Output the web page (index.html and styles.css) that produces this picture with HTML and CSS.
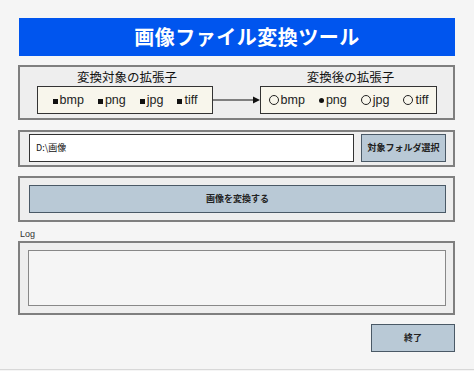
FILE: index.html
```html
<!DOCTYPE html>
<html lang="ja">
<head>
<meta charset="utf-8">
<title>画像ファイル変換ツール</title>
<link rel="stylesheet" href="styles.css">
</head>
<body>
<div class="app">
  <h1 class="title">画像ファイル変換ツール</h1>

  <section class="panel ext-panel">
    <div class="ext-label">変換対象の拡張子</div>
    <div></div>
    <div class="ext-label">変換後の拡張子</div>
    <div class="ext-box">
      <span class="opt"><i class="sq"></i>bmp</span>
      <span class="opt"><i class="sq"></i>png</span>
      <span class="opt"><i class="sq"></i>jpg</span>
      <span class="opt"><i class="sq"></i>tiff</span>
    </div>
    <div class="arrow">
      <svg width="47" height="10" viewBox="0 0 47 10"><line x1="0" y1="5" x2="41" y2="5" stroke="#111" stroke-width="1"/><polygon points="40,1.5 47,5 40,8.5" fill="#111"/></svg>
    </div>
    <div class="ext-box">
      <span class="opt"><i class="ring"></i>bmp</span>
      <span class="opt"><i class="dot"></i>png</span>
      <span class="opt"><i class="ring"></i>jpg</span>
      <span class="opt"><i class="ring"></i>tiff</span>
    </div>
  </section>

  <section class="panel folder-panel">
    <div class="path-input">D:\画像</div>
    <div class="btn folder-btn">対象フォルダ選択</div>
  </section>

  <section class="panel convert-panel">
    <div class="btn convert-btn">画像を変換する</div>
  </section>

  <div class="log-label">Log</div>
  <section class="panel log-panel">
    <div class="log-box"></div>
  </section>

  <div class="footer">
    <div class="btn end-btn">終了</div>
  </div>
</div>
</body>
</html>
```

FILE: styles.css
```css
html, body {
  margin: 0;
  padding: 0;
  background: #f5f5f5;
}
body {
  width: 474px;
  height: 371px;
  overflow: hidden;
  font-family: "Liberation Sans", "Noto Sans CJK JP", sans-serif;
  color: #111;
}
.app {
  padding: 18px 19px 0 18px;
  height: 351px;
  border-bottom: 1px solid #d8d8d8;
}
.title {
  margin: 0 0 9px 1px;
  height: 38px;
  background: #0055ee;
  color: #fff;
  font-family: "Noto Sans CJK JP", sans-serif;
  font-weight: 700;
  font-size: 20px;
  line-height: 38px;
  text-align: center;
  padding-left: 20px;
  letter-spacing: 0.5px;
}
.panel {
  border: 2px solid #7f7f7f;
  background: #eeeeee;
  box-sizing: border-box;
}
.ext-panel {
  height: 55px;
  margin-bottom: 10px;
  display: grid;
  grid-template-columns: 176px 47px 177px;
  grid-template-rows: 16px 28px;
  padding: 3px 16px 0 17px;
}
.ext-label {
  font-family: "Noto Sans CJK JP", sans-serif;
  font-size: 12.5px;
  line-height: 14px;
  text-align: center;
  font-weight: 400;
  padding-left: 4px;
}
.ext-box {
  border: 1px solid #333;
  background: #f8f6ec;
  box-sizing: border-box;
  display: flex;
  align-items: center;
  justify-content: center;
  gap: 14px;
  font-size: 12.5px;
  color: #222;
}
.opt {
  display: inline-flex;
  align-items: center;
}
.sq {
  display: inline-block;
  width: 5px;
  height: 5px;
  background: #111;
  margin-right: 2px;
  margin-top: 2px;
}
.ring {
  display: inline-block;
  width: 8px;
  height: 8px;
  border: 1px solid #222;
  border-radius: 50%;
  margin-right: 2px;
}
.dot {
  display: inline-block;
  width: 5px;
  height: 5px;
  background: #111;
  border-radius: 50%;
  margin-right: 2px;
}
.arrow {
  display: flex;
  align-items: center;
}
.arrow svg { display: block; }

.folder-panel {
  height: 37px;
  margin-bottom: 9px;
  display: flex;
  gap: 7px;
  padding: 2px 7px 3px 9px;
}
.path-input {
  flex: 1;
  background: #fff;
  border: 1px solid #333;
  box-sizing: border-box;
  font-family: "Noto Sans CJK JP", sans-serif;
  font-size: 9px;
  line-height: 26px;
  padding-left: 6px;
}
.btn {
  background: #b9c9d6;
  border: 1px solid #4a5966;
  box-sizing: border-box;
  font-family: "Noto Sans CJK JP", sans-serif;
  font-size: 9px;
  font-weight: 700;
  color: #222;
  text-align: center;
  height: 28px;
  line-height: 26px;
}
.folder-btn {
  width: 85px;
}
.convert-panel {
  height: 46px;
  padding: 7px 7px 7px 9px;
}
.convert-btn {
  width: 100%;
}
.log-label {
  font-size: 9px;
  color: #333;
  margin: 7px 0 0 2px;
  height: 12px;
  line-height: 10px;
}
.log-panel {
  height: 74px;
  padding: 7px 7px 7px 8px;
}
.log-box {
  height: 56px;
  border: 1px solid #888;
  background: #f5f5f5;
  box-sizing: border-box;
}
.footer {
  display: flex;
  justify-content: flex-end;
  margin-top: 9px;
}
.end-btn {
  width: 84px;
}
```
